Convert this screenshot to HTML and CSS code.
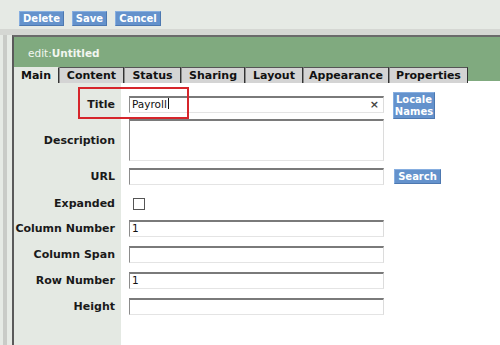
FILE: index.html
```html
<!DOCTYPE html>
<html lang="en">
<head>
  <meta charset="UTF-8" />
  <meta name="viewport" content="width=device-width, initial-scale=1.0"/>
  <title>Edit Portlet</title>
  <link rel="stylesheet" href="styles.css">
</head>
<body>
  <div class="toolbar">
    <button class="btn btn-delete">Delete</button>
    <button class="btn btn-save">Save</button>
    <button class="btn btn-cancel">Cancel</button>
  </div>
  <div class="sep"></div>
  <div class="page">
    <div class="gutter"><div class="gutter-line"></div></div>
    <div class="panel">
      <div class="panel-head">edit:<b>Untitled</b></div>
      <div class="tabs">
        <span class="tab active">Main</span>
        <span class="tab tab-content">Content</span>
        <span class="tab tab-status">Status</span>
        <span class="tab tab-sharing">Sharing</span>
        <span class="tab tab-layout">Layout</span>
        <span class="tab tab-appearance">Appearance</span>
        <span class="tab tab-properties">Properties</span>
      </div>
      <div class="form">
        <div class="row row-title">
          <div class="lbl">Title</div>
          <div class="input">Payroll<span class="caret"></span><span class="clear">&times;</span></div>
          <button class="btn btn-side btn-locale">Locale Names</button>
        </div>
        <div class="row row-desc">
          <div class="lbl">Description</div>
          <div class="input textarea"></div>
        </div>
        <div class="row row-url">
          <div class="lbl">URL</div>
          <div class="input"></div>
          <button class="btn btn-side btn-search">Search</button>
        </div>
        <div class="row row-check">
          <div class="lbl">Expanded</div>
          <div class="checkbox"></div>
        </div>
        <div class="row row-colnum">
          <div class="lbl">Column Number</div>
          <div class="input">1</div>
        </div>
        <div class="row">
          <div class="lbl">Column Span</div>
          <div class="input"></div>
        </div>
        <div class="row">
          <div class="lbl">Row Number</div>
          <div class="input">1</div>
        </div>
        <div class="row">
          <div class="lbl">Height</div>
          <div class="input"></div>
        </div>
        <div class="highlight"></div>
      </div>
    </div>
  </div>
</body>
</html>
```

FILE: styles.css
```css
html, body {
  margin: 0;
  height: 100%;
}
body {
  font-family: "DejaVu Sans", Verdana, sans-serif;
  font-size: 11px;
  color: #111;
  background: #e6eae5;
  display: flex;
  flex-direction: column;
  overflow: hidden;
}
.toolbar {
  display: flex;
  gap: 8px;
  padding: 11px 0 0 19px;
  height: 18px;
}
.btn {
  font-family: "DejaVu Sans", Verdana, sans-serif;
  font-size: 10px;
  font-weight: bold;
  color: #fff;
  background: #6492cc;
  border: 1px solid #4d78b0;
  border-top-color: #86aee0;
  border-left-color: #86aee0;
  height: 15px;
  padding: 0;
  line-height: 13px;
  margin: 0;
  cursor: pointer;
}
.btn-delete { width: 45px; }
.btn-save { width: 35px; }
.btn-cancel { width: 46px; }
.sep {
  height: 6px;
  background: #d5d7d3;
}
.page {
  flex: 1;
  display: flex;
  min-height: 0;
}
.gutter {
  width: 12px;
  display: flex;
  padding-left: 3px;
  box-sizing: border-box;
}
.gutter-line {
  width: 4px;
  background: #c9cbc7;
}
.panel {
  flex: 1;
  display: flex;
  flex-direction: column;
  border-left: 2px solid #5a5a5a;
  border-top: 2px solid #6a6a6a;
  background: #fff;
}
.panel-head {
  background: #80aa7f;
  color: #f2f6f0;
  height: 30px;
  line-height: 33px;
  padding-left: 14px;
  font-size: 10.5px;
}
.tabs {
  display: flex;
  height: 16px;
  background: linear-gradient(#80aa7f 14px, #fff 14px);
}
.tab {
  box-sizing: border-box;
  text-align: center;
  font-weight: bold;
  font-size: 11px;
  line-height: 15px;
  background: #d4d4d4;
  border-top: 1px solid #555;
  border-left: 1px solid #8a8a8a;
  border-right: 1px solid #333;
  color: #111;
  white-space: nowrap;
}
.tab.active {
  background: #e4e9e3;
  border-top-color: #e4e9e3;
  border-left: none;
  width: 45px;
}
.tab-content { width: 65px; }
.tab-status { width: 57px; }
.tab-sharing { width: 64px; }
.tab-layout { width: 58px; }
.tab-appearance { width: 86px; }
.tab-properties { width: 79px; }
.form {
  position: relative;
  flex: 1;
  padding-top: 13px;
  background: linear-gradient(to right, #e4e9e3 107px, #fff 107px);
}
.row {
  display: flex;
  align-items: center;
  height: 17px;
  margin-bottom: 9px;
}
.row-title { margin-bottom: 6px; }
.row-desc { height: 42px; margin-bottom: 7px; }
.row-url { margin-bottom: 10px; }
.row-check { margin-bottom: 8px; }
.lbl {
  width: 107px;
  box-sizing: border-box;
  padding-right: 6px;
  text-align: right;
  font-weight: bold;
  font-size: 11px;
  color: #1a1a1a;
}
.input {
  position: relative;
  margin-left: 8px;
  width: 255px;
  height: 100%;
  box-sizing: border-box;
  border-top: 2px solid #7a7a7a;
  border-left: 1px solid #8c8c8c;
  border-right: 1px solid #dcdcdc;
  border-bottom: 1px solid #e4e4e4;
  background: #fff;
  padding-left: 2px;
  line-height: 13px;
  font-size: 10.5px;
  color: #111;
}
.caret {
  display: inline-block;
  width: 1px;
  height: 11px;
  background: #111;
  vertical-align: -1px;
  margin-left: 1px;
}
.clear {
  position: absolute;
  right: 4px;
  top: 0;
  font-size: 11px;
  font-weight: bold;
  color: #444;
}
.checkbox {
  margin-left: 12px;
  width: 12px;
  height: 12px;
  box-sizing: border-box;
  border: 1px solid #555;
  background: #fff;
}
.btn-side {
  margin-left: 9px;
}
.btn-locale {
  width: 42px;
  height: 27px;
  padding: 0;
  line-height: 12px;
  white-space: normal;
  align-self: flex-start;
  margin-top: -4px;
  font-size: 10px;
}
.btn-search {
  margin-left: 10px;
  width: 47px;
  padding: 0;
}
.highlight {
  position: absolute;
  left: 64px;
  top: 4px;
  width: 111px;
  height: 32px;
  box-sizing: border-box;
  border: 2px solid #d6252b;
}
```
